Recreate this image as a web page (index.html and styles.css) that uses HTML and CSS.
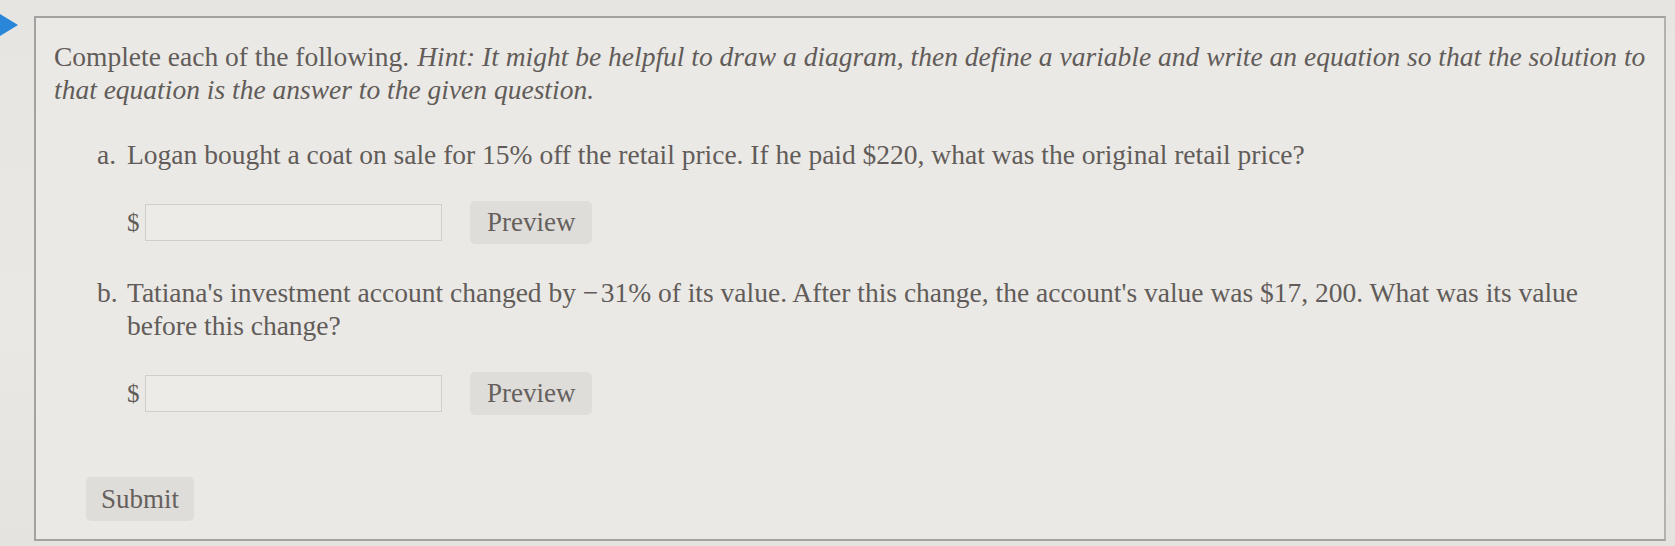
FILE: index.html
```html
<!DOCTYPE html>
<html>
<head>
<meta charset="utf-8">
<link rel="stylesheet" href="styles.css">
</head>
<body>
<div class="page">
  <svg class="marker" width="18" height="22" viewBox="0 0 18 22"><path d="M0 0 L18 11 L0 22 Z" fill="#2a86d8"/></svg>
  <div class="card">
    <p class="intro">Complete each of the following.<em class="hint">Hint: It might be helpful to draw a diagram, then define a variable and write an equation so that the solution to that equation is the answer to the given question.</em></p>
    <ol class="parts">
      <li class="part">
        <span class="label">a.</span>
        <div class="body">
          <p class="q">Logan bought a coat on sale for 15% off the retail price. If he paid $220, what was the original retail price?</p>
          <div class="answer"><span class="cur">$</span><span class="field"></span><span class="btn">Preview</span></div>
        </div>
      </li>
      <li class="part">
        <span class="label">b.</span>
        <div class="body">
          <p class="q">Tatiana's investment account changed by &minus;&#8202;31% of its value. After this change, the account's value was $17, 200. What was its value before this change?</p>
          <div class="answer"><span class="cur">$</span><span class="field"></span><span class="btn">Preview</span></div>
        </div>
      </li>
    </ol>
    <div class="actions"><span class="btn submit">Submit</span></div>
  </div>
</div>
</body>
</html>
```
FILE: styles.css
```css
html, body {
  margin: 0;
  height: 100%;
}
body {
  background: linear-gradient(180deg, #e7e5e1 0%, #eae8e4 60%, #e5e3df 100%);
  font-family: "Liberation Serif", "Times New Roman", serif;
  color: #615c59;
  overflow: hidden;
}
.page {
  display: flex;
  align-items: flex-start;
  padding-top: 16px;
}
.marker {
  flex: none;
  margin-top: -2px;
  width: 18px;
  margin-right: 16px;
}
.card {
  width: 1632px;
  height: 525px;
  border: 2px solid #a4a2a0;
  border-right-color: #b4b2b0;
  background: #ebe9e5;
  padding: 22px 0 0 18px;
  box-sizing: border-box;
  font-size: 27.5px;
  line-height: 33px;
}
.intro {
  margin: 0;
  padding-right: 4px;
}
.hint {
  font-style: italic;
  margin-left: 8px;
}
.parts {
  list-style: none;
  margin: 32px 0 0 0;
  padding: 0 0 0 43px;
}
.part {
  display: flex;
}
.part + .part {
  margin-top: 32px;
}
.label {
  flex: none;
  width: 30px;
}
.body {
  flex: 1;
  padding-right: 50px;
}
.q {
  margin: 0;
}
.answer {
  display: flex;
  align-items: center;
  margin-top: 30px;
  height: 43px;
}
.cur {
  font-size: 25px;
  width: 18px;
}
.field {
  width: 295px;
  height: 35px;
  border: 1px solid #d0cecb;
  background: #ecebe7;
  margin-right: 28px;
}
.btn {
  display: inline-flex;
  align-items: center;
  justify-content: center;
  height: 43px;
  padding: 0 17px;
  background: #dfddd9;
  border-radius: 5px;
  color: #66605d;
  font-size: 27px;
}
.actions {
  margin-top: 62px;
  padding-left: 32px;
}
.submit {
  height: 44px;
  padding: 0 15px;
}
```
